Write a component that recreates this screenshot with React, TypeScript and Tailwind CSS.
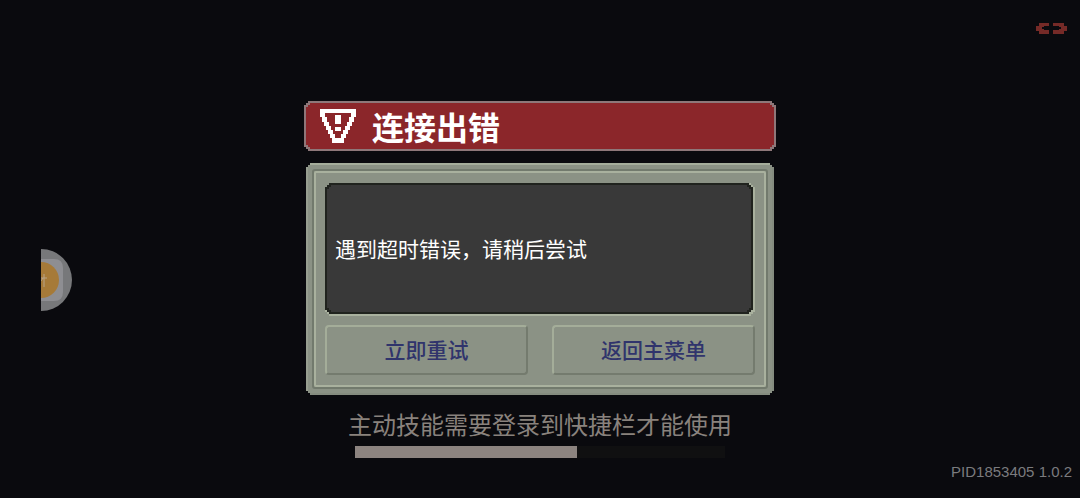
import type { ReactNode } from 'react';

const progress = 60;

// stepped 2px corners, used by every framed box
const pixelCorners =
  '[clip-path:polygon(4px_0,calc(100%-4px)_0,calc(100%-4px)_2px,calc(100%-2px)_2px,calc(100%-2px)_4px,100%_4px,100%_calc(100%-4px),calc(100%-2px)_calc(100%-4px),calc(100%-2px)_calc(100%-2px),calc(100%-4px)_calc(100%-2px),calc(100%-4px)_100%,4px_100%,4px_calc(100%-2px),2px_calc(100%-2px),2px_calc(100%-4px),0_calc(100%-4px),0_4px,2px_4px,2px_2px,4px_2px)]';

function WarningIcon() {
  return (
    <svg
      className="h-[34px] w-9 shrink-0"
      viewBox="0 0 36 34"
      fill="#fff"
      shapeRendering="crispEdges"
      aria-hidden="true"
    >
      <path
        fillRule="evenodd"
        d="M0 0H36V8H34V13H32V17H30V21H28V25H26V29H24V34H12V29H10V25H8V21H6V17H4V13H2V8H0ZM5 4V8H7V13H9V17H11V21H13V25H15V29H21V25H23V21H25V17H27V13H29V8H31V4Z"
      />
      <path d="M15 6H21V15H15ZM15 18H21V22H15Z" />
    </svg>
  );
}

function LinkIcon() {
  return (
    <svg
      className="absolute top-[22px] right-[13px] h-3 w-[31px]"
      viewBox="0 0 31 12"
      fill="#752a27"
      shapeRendering="crispEdges"
      aria-hidden="true"
    >
      <path d="M3 1H13V4H8V5H6V7H8V8H13V12H3V9H0V4H3ZM17 1H28V4H31V9H28V12H17V8H23V7H25V5H23V4H17Z" />
    </svg>
  );
}

function FloatingBall() {
  return (
    <svg
      className="absolute top-1/2 left-[41px] h-[62px] w-8"
      viewBox="0 0 32 62"
      aria-hidden="true"
    >
      <path d="M0 0A31 31 0 0 1 0 62Z" fill="#77787a" />
      <path d="M0 10H13Q22 10 22 19V43Q22 52 13 52H0Z" fill="#8e8e92" />
      <path d="M0 13A18 18 0 0 1 0 49Z" fill="#a67a38" />
      <path d="M0 29H6M3 25V38M0 32L2 29" stroke="#b8a388" strokeWidth="1" fill="none" />
    </svg>
  );
}

function PanelButton({ children }: { children: ReactNode }) {
  return (
    <button
      type="button"
      className="h-[50px] flex-1 rounded-[4px] border-2 border-t-[#a4ad99] border-r-[#747b6e] border-b-[#747b6e] border-l-[#a4ad99] bg-[#8b9285] text-[21px] font-medium text-[#30346c]"
    >
      {children}
    </button>
  );
}

export default function App() {
  return (
    <main className="relative flex min-h-screen flex-col items-center bg-[#0a0a0e] px-4 pt-[101px] pb-8 font-['Noto_Sans_CJK_SC',sans-serif]">
      <LinkIcon />
      <FloatingBall />

      <section className="flex w-full max-w-[472px] flex-col gap-3">
        <header className={`bg-[#8e7779] p-[2px] ${pixelCorners}`}>
          <div className={`flex h-[46px] items-center gap-4 bg-[#8b262a] px-[14px] ${pixelCorners}`}>
            <WarningIcon />
            <h1 className="text-[32px] leading-[46px] font-bold text-white">连接出错</h1>
          </div>
        </header>

        <div
          className={`mx-[2px] border-2 border-t-[#a5ad9b] border-r-[#858c7f] border-b-[#858c7f] border-l-[#979e90] bg-[#8b9285] p-1 ${pixelCorners}`}
        >
          <div className="rounded-[3px] border-2 border-[#727a6d]">
            <div className="rounded-[2px] border-2 border-[#a9b19e] px-[9px] py-[10px]">
              <div className={`bg-[#a9b19e] pr-[2px] pb-[2px] ${pixelCorners}`}>
                <div className={`bg-[#20231e] p-[2px] ${pixelCorners}`}>
                  <div className={`flex min-h-[127px] items-center bg-[#393939] px-2 ${pixelCorners}`}>
                    <p className="text-[21px] text-white">遇到超时错误，请稍后尝试</p>
                  </div>
                </div>
              </div>
              <div className="mt-[9px] flex gap-6">
                <PanelButton>立即重试</PanelButton>
                <PanelButton>返回主菜单</PanelButton>
              </div>
            </div>
          </div>
        </div>
      </section>

      <p className="mt-[13px] text-center text-[24px] leading-8 text-[#89827d]">
        主动技能需要登录到快捷栏才能使用
      </p>
      <div
        className="mt-1.5 h-3 w-full max-w-[370px] bg-[#101011]"
        role="progressbar"
        aria-label="主动技能需要登录到快捷栏才能使用"
        aria-valuenow={progress}
      >
        <div className="h-full bg-[#8d8480]" style={{ width: `${progress}%` }} />
      </div>

      <p className="absolute right-2 bottom-4 font-['Liberation_Sans',sans-serif] text-[15px] leading-5 text-[#7b7b7e]">
        PID1853405 1.0.2
      </p>
    </main>
  );
}
